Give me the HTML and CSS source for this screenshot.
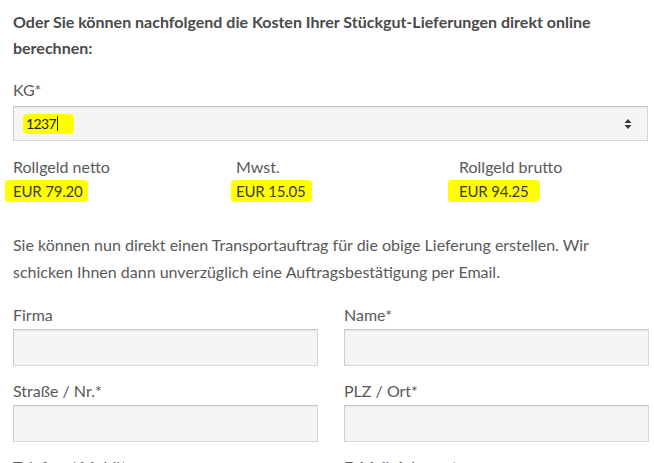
FILE: index.html
```html
<!DOCTYPE html>
<html lang="de">
<head>
<meta charset="utf-8">
<title>Stückgut-Lieferungen</title>
<link rel="stylesheet" href="styles.css">
</head>
<body>
<div class="page">
  <p class="intro">Oder Sie können nachfolgend die Kosten Ihrer Stückgut-Lieferungen direkt online berechnen:</p>

  <div class="field">
    <label class="label">KG*</label>
    <div class="select">
      <span class="mark mark-input">1237<span class="caret"></span></span>
      <svg class="arrows" width="8" height="12" viewBox="0 0 8 12"><path d="M4 1 L7.5 5 L0.5 5 Z M0.5 7 L7.5 7 L4 11 Z" fill="#3a3a3a"/></svg>
    </div>
  </div>

  <div class="costs">
    <div class="cost">
      <div class="cost-label">Rollgeld netto</div>
      <div class="cost-value"><span class="mark mark-a">EUR 79.20</span></div>
    </div>
    <div class="cost">
      <div class="cost-label">Mwst.</div>
      <div class="cost-value"><span class="mark mark-b">EUR 15.05</span></div>
    </div>
    <div class="cost">
      <div class="cost-label">Rollgeld brutto</div>
      <div class="cost-value"><span class="mark mark-c">EUR 94.25</span></div>
    </div>
  </div>

  <p class="text">Sie können nun direkt einen Transportauftrag für die obige Lieferung erstellen. Wir schicken Ihnen dann unverzüglich eine Auftragsbestätigung per Email.</p>

  <div class="form-grid">
    <div class="field">
      <label class="label">Firma</label>
      <div class="input"></div>
    </div>
    <div class="field">
      <label class="label">Name*</label>
      <div class="input"></div>
    </div>
    <div class="field">
      <label class="label">Straße / Nr.*</label>
      <div class="input"></div>
    </div>
    <div class="field">
      <label class="label">PLZ / Ort*</label>
      <div class="input"></div>
    </div>
    <div class="field">
      <label class="label">Telefon / Mobil*</label>
      <div class="input"></div>
    </div>
    <div class="field">
      <label class="label">E-Mail-Adresse*</label>
      <div class="input"></div>
    </div>
  </div>
</div>
</body>
</html>
```

FILE: styles.css
```css
html, body {
  margin: 0;
  padding: 0;
  background: #ffffff;
}

body {
  font-family: Lato, "Open Sans", sans-serif;
  font-size: 16px;
  color: #595959;
  overflow: hidden;
}

.page {
  width: 636px;
  padding: 9px 0 0 13px;
}

.intro {
  margin: 0;
  font-size: 16px;
  font-weight: 700;
  line-height: 26px;
  color: #4a4a4a;
}

.field {
  display: flex;
  flex-direction: column;
}

.intro + .field {
  margin-top: 17px;
}

.label {
  display: block;
  line-height: 24px;
  margin-bottom: 4px;
}

.select,
.input {
  box-sizing: border-box;
  background: #f5f5f5;
  border: 1px solid #d6d6d6;
  border-top-color: #c6c6c6;
  border-left-color: #cdcdcd;
  box-shadow: inset 0 1px 1px rgba(0, 0, 0, 0.06);
}

.select {
  height: 35px;
  width: 635px;
  display: flex;
  align-items: center;
  justify-content: space-between;
  padding: 0 15px 0 9px;
}

.input {
  height: 37px;
}

.arrows {
  display: block;
}

.mark {
  display: inline-block;
  background: #ffff00;
  color: #3c3c3c;
  border-radius: 4px;
}

.mark-input {
  font-size: 14px;
  letter-spacing: -0.6px;
  line-height: 20px;
  padding: 0 16px 0 3px;
  color: #222;
}

.caret {
  display: inline-block;
  width: 1px;
  height: 15px;
  background: #222;
  vertical-align: -2px;
  margin-left: 1px;
}

.costs {
  display: grid;
  grid-template-columns: 223px 223px 1fr;
  margin-top: 12px;
}

.cost-label {
  line-height: 27px;
}

.cost-value {
  line-height: 22px;
  height: 22px;
  font-size: 15px;
  letter-spacing: -0.2px;
}

.mark-a {
  margin-left: -8px;
  padding: 0 6px 0 8px;
}

.mark-b {
  margin-left: -5px;
  padding: 0 7px 0 5px;
}

.mark-c {
  margin-left: -11px;
  padding: 0 12px 0 11px;
  border-radius: 4px 4px 6px 3px;
}

.text {
  margin: 29px 0 0;
  line-height: 27px;
}

.form-grid {
  display: grid;
  grid-template-columns: 305px 305px;
  column-gap: 26px;
  row-gap: 13px;
  margin-top: 18px;
}

.form-grid .label {
  margin-bottom: 2px;
}
```
